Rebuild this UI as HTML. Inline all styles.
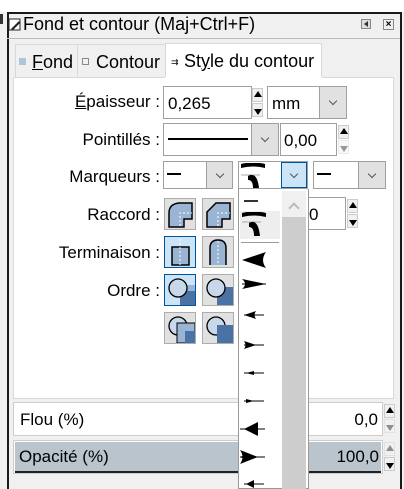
<!DOCTYPE html>
<html><head><meta charset="utf-8"><style>
*{box-sizing:border-box;margin:0;padding:0}
body{width:404px;height:489px;overflow:hidden;background:#fff;font-family:"Liberation Sans",sans-serif;font-size:16px;color:#000;position:relative}
.a{position:absolute}
.inp{position:absolute;background:#fff;border:1px solid #a0a0a0}
.arr{position:absolute;background:#e1e1e1;border-left:1px solid #a0a0a0;top:0;bottom:0;right:0}
.arr:after{content:"";position:absolute;left:50%;top:45%;width:5px;height:5px;border-right:1px solid #555;border-bottom:1px solid #555;transform:translate(-50%,-50%) rotate(45deg)}
.lbl{position:absolute;text-align:right;width:150px;left:10px;font-size:17px}
.btn{position:absolute;width:32px;height:32px;background:#e1e1e1;border:1px solid #adadad}
.btn.sel{background:#cce4f7;border-color:#005499}
.spin{position:absolute;width:11px}
.spin i{position:absolute;left:0;width:11px;height:14px;border:1px solid #ccc;background:#f0f0f0}
.spin i:before{content:"";position:absolute;left:1px;border-left:4px solid transparent;border-right:4px solid transparent}
.up:before{top:2px;border-bottom:6px solid #000}
.dn:before{top:5px;border-top:6px solid #000}
.mk{position:absolute;left:244px;height:2px;background:#000}
</style></head><body>
<div class="a" style="left:0;top:12px;width:404px;height:477px;background:#f0f0f0"></div>
<div class="a" style="left:7px;top:12px;width:395px;height:477px;border:2px solid #1a1a1a;border-bottom:none;background:#f0f0f0"></div>
<div class="a" style="left:0;top:14px;width:3px;height:10px;background:#333"></div>
<svg class="a" style="left:8px;top:18px" width="14" height="14"><rect x="1" y="1" width="11" height="11" fill="#fff" stroke="#222"/><path d="M3 11 L11 3 L12 5 L5 12Z" fill="#222"/></svg>
<div class="a" style="left:23px;top:14px;font-size:18px;color:#000">Fond et contour (Maj+Ctrl+F)</div>
<div class="a" style="left:361px;top:19px;width:10px;height:10px;border:1px solid #888;background:#ddd"></div>
<div class="a" style="left:364px;top:21px;border-top:3px solid transparent;border-bottom:3px solid transparent;border-right:4px solid #333"></div>
<div class="a" style="left:383px;top:19px;width:11px;height:11px;border:1px solid #888;font-size:10px;line-height:9px;text-align:center;font-weight:bold">×</div>
<div class="a" style="left:7px;top:38px;width:393px;height:1px;background:#bbb"></div>
<!-- tabs -->
<div class="a" style="left:15px;top:44px;width:63px;height:33px;background:#f0f0f0;border:1px solid #d9d9d9;border-bottom:none"></div>
<div class="a" style="left:19px;top:58px;width:7px;height:7px;background:#b0c4dc"></div>
<div class="a" style="left:32px;top:52px;font-size:18px"><u>F</u>ond</div>
<div class="a" style="left:78px;top:44px;width:88px;height:33px;background:#f0f0f0;border:1px solid #d9d9d9;border-bottom:none;border-left:none"></div>
<div class="a" style="left:82px;top:58px;width:7px;height:7px;border:1px solid #888"></div>
<div class="a" style="left:96px;top:52px;font-size:18px">Contour</div>
<div class="a" style="left:165px;top:43px;width:157px;height:36px;background:#fff;border:1px solid #d9d9d9;border-bottom:none"></div>
<div class="a" style="left:171px;top:57px;font-size:9px">⇉</div>
<div class="a" style="left:184px;top:51px;font-size:18px">St<u>y</u>le du contour</div>
<div class="a" style="left:13px;top:77px;width:381px;height:322px;background:#fff;border:1px solid #d9d9d9;border-top:none"></div>
<div class="a" style="left:322px;top:77px;width:72px;height:1px;background:#d9d9d9"></div>
<div class="a" style="left:13px;top:77px;width:152px;height:1px;background:#d9d9d9"></div>
<!-- épaisseur -->
<div class="lbl" style="top:92px"><u>É</u>paisseur :</div>
<div class="inp" style="left:163px;top:86px;width:89px;height:33px"><span class="a" style="left:4px;top:7px;font-size:17px">0,265</span></div>
<div class="spin" style="left:252px;top:88px"><i class="up" style="top:0"></i><i class="dn" style="top:15px"></i></div>
<div class="inp" style="left:267px;top:86px;width:80px;height:33px"><span class="a" style="left:4px;top:7px;font-size:17px">mm</span><div class="arr" style="width:27px"></div></div>
<!-- pointillés -->
<div class="lbl" style="top:130px">Pointillés :</div>
<div class="inp" style="left:163px;top:123px;width:116px;height:33px"><div class="a" style="left:4px;top:14px;width:80px;height:2px;background:#000"></div><div class="arr" style="width:27px"></div></div>
<div class="inp" style="left:280px;top:123px;width:57px;height:33px"><span class="a" style="left:3px;top:7px;font-size:17px">0,00</span></div>
<div class="spin" style="left:338px;top:125px"><i class="up" style="top:0"></i><i class="dn" style="top:15px;opacity:.4"></i></div>
<!-- marqueurs -->
<div class="lbl" style="top:167px">Marqueurs :</div>
<div class="inp" style="left:163px;top:161px;width:70px;height:28px"><div class="a" style="left:3px;top:11px;width:14px;height:2px;background:#000"></div><div class="arr" style="width:26px"></div></div>
<div class="inp" style="left:238px;top:161px;width:70px;height:28px"><svg class="a" style="left:1px;top:1px" width="26" height="26"><path d="M1 1 Q13 -2 25 1 L25 5 Q13 2 1 5Z" fill="#000"/><line x1="1" y1="12" x2="20" y2="12" stroke="#aaa"/><path d="M8 13 Q17 8 19 25 L13 25 Q13 17 8 17Z" fill="#000"/></svg><div class="arr" style="width:26px;background:#cce4f7;border:1px solid #005499"></div></div>
<div class="inp" style="left:313px;top:161px;width:73px;height:28px"><div class="a" style="left:3px;top:11px;width:14px;height:2px;background:#000"></div><div class="arr" style="width:27px"></div></div>
<!-- partially hidden spin field -->
<div class="inp" style="left:300px;top:197px;width:46px;height:33px"><span class="a" style="left:8px;top:7px;font-size:17px">0</span></div>
<div class="spin" style="left:347px;top:199px"><i class="up" style="top:0"></i><i class="dn" style="top:15px"></i></div>
<!-- raccord etc -->
<div class="lbl" style="top:205px">Raccord :</div>
<div class="lbl" style="top:243px">Terminaison :</div>
<div class="lbl" style="top:281px">Ordre :</div>
<div class="btn" style="left:164px;top:198px"><svg width="30" height="30"><path d="M4 28 L4 14 Q4 5 14 4 L27 4 L27 20 L19 20 L19 28Z" fill="#9ab4d4" stroke="#000" stroke-width="1.5"/><path d="M15 27 V14 H27" stroke="#fff" stroke-dasharray="2 2" fill="none"/></svg></div>
<div class="btn" style="left:202px;top:198px"><svg width="30" height="30"><path d="M4 28 L4 13 L13 4 L27 4 L27 20 L19 20 L19 28Z" fill="#9ab4d4" stroke="#000" stroke-width="1.5"/><path d="M15 27 V14 H27" stroke="#fff" stroke-dasharray="2 2" fill="none"/></svg></div>
<div class="btn sel" style="left:164px;top:236px"><svg width="30" height="30"><rect x="7" y="10" width="17" height="18" fill="#9ab4d4" stroke="#000" stroke-width="1.5"/><path d="M15 2 V28" stroke="#fff" stroke-dasharray="2 2"/></svg></div>
<div class="btn" style="left:202px;top:236px"><svg width="30" height="30"><path d="M7 28 V11 Q7 3 15 3 Q23 3 23 11 V28" fill="#9ab4d4" stroke="#000" stroke-width="1.5"/><path d="M15 4 V28" stroke="#fff" stroke-dasharray="2 2"/></svg></div>
<div class="btn sel" style="left:164px;top:274px"><svg width="30" height="30"><rect x="15" y="14" width="15" height="16" fill="#4a72a4"/><rect x="15" y="10" width="15" height="6" fill="#9ab4d4"/><circle cx="13" cy="13" r="9" fill="#c8d8ea" stroke="#000" stroke-width="1.3"/></svg></div>
<div class="btn" style="left:202px;top:274px"><svg width="30" height="30"><rect x="14" y="12" width="16" height="18" fill="#4a72a4"/><circle cx="13" cy="13" r="9" fill="#c8d8ea" stroke="#000" stroke-width="1.3"/></svg></div>
<div class="btn" style="left:164px;top:312px"><svg width="30" height="30"><circle cx="13" cy="13" r="9" fill="#c8d8ea" stroke="#000" stroke-width="1.3"/><rect x="12" y="10" width="18" height="20" fill="#9ab4d4" stroke="#000"/><rect x="20" y="18" width="10" height="12" fill="#4a72a4"/></svg></div>
<div class="btn" style="left:202px;top:312px"><svg width="30" height="30"><circle cx="13" cy="13" r="9" fill="#c8d8ea" stroke="#000" stroke-width="1.3"/><rect x="14" y="12" width="16" height="18" fill="#4a72a4"/></svg></div>
<!-- flou / opacité -->
<div class="inp" style="left:13px;top:402px;width:370px;height:34px;border-color:#ccc"><span class="a" style="left:6px;top:7px;font-size:17px">Flou (%)</span><span class="a" style="right:4px;top:7px;font-size:17px">0,0</span></div>
<div class="spin" style="left:384px;top:404px"><i class="up" style="top:0"></i><i class="dn" style="top:15px;opacity:.4"></i></div>
<div class="a" style="left:13px;top:440px;width:370px;height:34px;border:1px solid #ccc;background:#fff"></div>
<div class="a" style="left:15px;top:442px;width:366px;height:31px;background:#b9c4cc;border-bottom:2px solid #222"><span class="a" style="left:4px;top:5px;font-size:17px">Opacité (%)</span><span class="a" style="right:2px;top:5px;font-size:17px">100,0</span></div>
<div class="spin" style="left:384px;top:442px"><i class="up" style="top:0;opacity:.4"></i><i class="dn" style="top:15px"></i></div>
<!-- dropdown list -->
<div class="a" style="left:238px;top:189px;width:71px;height:300px;background:#fff;border:1px solid #999;border-top:none"></div>
<div class="a" style="left:282px;top:191px;width:24px;height:298px;background:#f0f0f0"></div>
<div class="a" style="left:282px;top:217px;width:24px;height:272px;background:#cdcdcd"></div>
<div class="a" style="left:290px;top:204px;width:8px;height:8px;border-left:2px solid #bbb;border-top:2px solid #bbb;transform:rotate(45deg)"></div>
<div class="mk" style="top:200px;width:14px;background:#333"></div>
<div class="a" style="left:240px;top:211px;width:40px;height:28px;background:#eee"></div>
<svg class="a" style="left:241px;top:212px" width="26" height="26"><path d="M1 1 Q13 -2 25 1 L25 5 Q13 2 1 5Z" fill="#000"/><line x1="1" y1="10" x2="20" y2="10" stroke="#aaa"/><path d="M8 11 Q17 6 19 24 L13 24 Q13 15 8 15Z" fill="#000"/></svg>
<div class="a" style="left:241px;top:242px;width:38px;height:1px;background:#999"></div>
<svg class="a" style="left:240px;top:248px" width="40" height="240">
<path d="M2 12 L26 4 Q20 12 26 20Z" fill="#000"/>
<path d="M2 41 L26 36 L2 31 Q8 36 2 41Z" fill="#000"/><line x1="2" y1="36" x2="26" y2="36" stroke="#000"/>
<path d="M4 67 L16 63 Q13 67 16 71Z" fill="#000"/><line x1="4" y1="67" x2="24" y2="67" stroke="#000"/>
<path d="M16 97 L4 93 Q7 97 4 101Z" fill="#000"/><line x1="4" y1="97" x2="24" y2="97" stroke="#000"/>
<path d="M6 125 L14 123 L14 127Z" fill="#000"/><line x1="4" y1="125" x2="24" y2="125" stroke="#000"/>
<path d="M14 153 L6 151 L6 155Z" fill="#000"/><line x1="4" y1="153" x2="24" y2="153" stroke="#000"/>
<path d="M4 181 L18 174 L18 188Z" fill="#000"/><line x1="0" y1="181" x2="25" y2="181" stroke="#000"/>
<path d="M0 209 Q8 205 18 209 Q8 213 0 209Z M0 202 L18 209 L0 216 Q5 209 0 202Z" fill="#000"/><line x1="0" y1="209" x2="25" y2="209" stroke="#000"/>
<path d="M6 236 L14 232 L14 240Z" fill="#000"/><line x1="4" y1="236" x2="24" y2="236" stroke="#000"/>
</svg>
</body></html>
